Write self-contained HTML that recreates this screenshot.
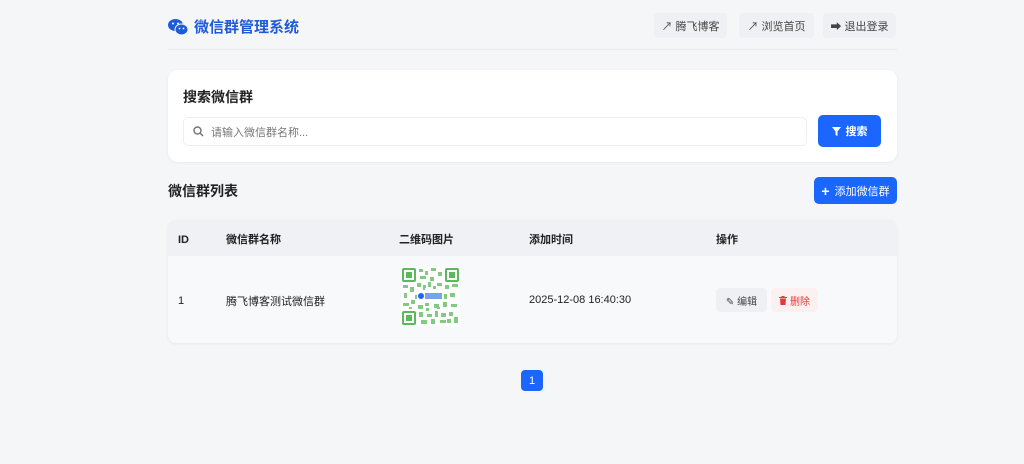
<!DOCTYPE html><html><head><meta charset="utf-8"><style>
*{box-sizing:border-box;margin:0;padding:0}
body{width:1024px;height:464px;background:#f5f6f8;font-family:"Liberation Sans","Noto Sans CJK SC",sans-serif;color:#222;position:relative;overflow:hidden}
.a{position:absolute}
.nav{position:absolute;top:13px;height:25px;background:#eef0f3;border-radius:4px;font-size:11px;color:#444;display:flex;align-items:center;justify-content:center;gap:4px}
.btn{position:absolute;background:#1a66ff;color:#fff;border-radius:5px;font-size:11px;font-weight:bold;display:flex;align-items:center;justify-content:center;gap:5px}
</style></head><body>
<div class="a" style="left:168px;top:16px;display:flex;align-items:center;gap:6px;color:#1e5bd8;font-size:15px;font-weight:bold">
<svg width="20" height="18" viewBox="0 0 20 18"><ellipse cx="7.5" cy="7" rx="7.5" ry="6" fill="#1e5bd8"/><ellipse cx="13.5" cy="11.5" rx="6.5" ry="5.5" fill="#1e5bd8" stroke="#f5f6f8" stroke-width="1"/><circle cx="5" cy="5.5" r="1" fill="#fff"/><circle cx="10" cy="5.5" r="1" fill="#fff"/><circle cx="11.5" cy="10.5" r=".9" fill="#fff"/><circle cx="15.5" cy="10.5" r=".9" fill="#fff"/></svg>微信群管理系统</div>
<div class="nav" style="left:654px;width:73px">↗ 腾飞博客</div>
<div class="nav" style="left:739px;width:75px">↗ 浏览首页</div>
<div class="nav" style="left:823px;width:73px">➡ 退出登录</div>
<div class="a" style="left:168px;top:49px;width:729px;height:1px;background:#e8eaee"></div>
<div class="a" style="left:168px;top:70px;width:729px;height:92px;background:#fff;border-radius:10px;box-shadow:0 1px 3px rgba(0,0,0,.05)"></div>
<div class="a" style="left:183px;top:87px;font-size:14px;font-weight:bold">搜索微信群</div>
<div class="a" style="left:183px;top:117px;width:624px;height:29px;border:1px solid #eceef1;border-radius:5px;font-size:11px;color:#777;display:flex;align-items:center;padding-left:9px;gap:7px">
<svg width="11" height="11" viewBox="0 0 11 11"><circle cx="4.5" cy="4.5" r="3.5" fill="none" stroke="#777" stroke-width="1.5"/><path d="M7 7l3 3" stroke="#777" stroke-width="1.5"/></svg>请输入微信群名称...</div>
<div class="btn" style="left:818px;top:115px;width:63px;height:32px"><svg width="9" height="9" viewBox="0 0 9 9"><path d="M0 0h9L5.5 4.5V9L3.5 8V4.5z" fill="#fff"/></svg>搜索</div>
<div class="a" style="left:168px;top:181px;font-size:14px;font-weight:bold">微信群列表</div>
<div class="btn" style="left:814px;top:177px;width:83px;height:27px;font-weight:normal"><b style="font-size:14px">+</b>添加微信群</div>
<div class="a" style="left:168px;top:220px;width:729px;height:123px;border-radius:8px;overflow:hidden;background:#f8f9fb;box-shadow:0 1px 3px rgba(0,0,0,.06)">
<div style="height:36px;background:#eff1f4"></div></div>
<div class="a" style="top:234px;left:178px;font-size:11px;font-weight:bold">ID</div>
<div class="a" style="top:231px;left:226px;font-size:11px;font-weight:bold">微信群名称</div>
<div class="a" style="top:231px;left:399px;font-size:11px;font-weight:bold">二维码图片</div>
<div class="a" style="top:231px;left:529px;font-size:11px;font-weight:bold">添加时间</div>
<div class="a" style="top:231px;left:716px;font-size:11px;font-weight:bold">操作</div>
<div class="a" style="top:295px;left:178px;font-size:11px">1</div>
<div class="a" style="top:293px;left:226px;font-size:11px">腾飞博客测试微信群</div>
<div class="a" style="top:294px;left:529px;font-size:11px">2025-12-08 16:40:30</div>
<svg class="a" style="left:401px;top:267px" width="59" height="59" viewBox="0 0 59 59">
<rect width="59" height="59" fill="#fff"/>
<g fill="#5cb85c">
<rect x="1" y="1" width="14" height="14" rx="2"/><rect x="44" y="1" width="14" height="14" rx="2"/><rect x="1" y="44" width="14" height="14" rx="2"/>
</g>
<g fill="#fff"><rect x="3" y="3" width="10" height="10"/><rect x="46" y="3" width="10" height="10"/><rect x="3" y="46" width="10" height="10"/></g>
<g fill="#5cb85c"><rect x="5" y="5" width="6" height="6"/><rect x="48" y="5" width="6" height="6"/><rect x="5" y="48" width="6" height="6"/></g>
<g fill="#6cbf6c" opacity=".85">
<path d="M18 2h4v3h-4zM24 4h3v4h-3zM30 1h5v3h-5zM37 5h4v4h-4zM19 9h6v3h-6zM29 10h4v4h-4zM2 18h5v3H2zM9 20h4v5H9zM16 16h4v4h-4zM36 16h5v3h-5zM44 18h4v4h-4zM51 17h6v3h-6zM3 26h3v5H3zM49 26h5v4h-5zM2 36h6v3H2zM10 33h4v4h-4zM17 38h5v4h-5zM24 36h4v3h-4zM33 37h5v4h-5zM42 35h4v5h-4zM50 37h6v3h-6zM18 45h4v5h-4zM26 47h5v3h-5zM34 44h3v6h-3zM40 46h5v4h-5zM48 45h4v4h-4zM53 50h4v6h-4zM20 53h6v4h-6zM30 52h4v5h-4zM39 53h6v3h-6zM46 52h4v4h-4zM14 28h3v4h-3zM42 27h4v5h-4zM22 18h3v3h-3zM27 15h3v5h-3zM32 19h3v3h-3zM8 40h3v2H8zM25 41h3v3h-3zM36 40h3v2h-3zM22 21h2v2h-2z"/></g>
<rect x="16" y="24" width="27" height="10" fill="#fff"/><circle cx="20" cy="29" r="3" fill="#1a66ff"/><rect x="24" y="26" width="17" height="6" fill="#3b7de0" opacity=".7"/>
</svg>
<div class="a" style="left:716px;top:288px;width:51px;height:24px;background:#eef0f3;border-radius:4px;font-size:10px;color:#444;display:flex;align-items:center;justify-content:center;gap:3px">✎ 编辑</div>
<div class="a" style="left:771px;top:288px;width:47px;height:24px;background:#fdf0f0;border-radius:4px;font-size:10px;color:#e03c3c;display:flex;align-items:center;justify-content:center;gap:3px"><svg width="8" height="9" viewBox="0 0 8 9"><path d="M0 1h8v1H0zM2.5 0h3v1h-3zM1 2.5h6L6.5 9h-5z" fill="#e03c3c"/></svg>删除</div>
<div class="btn" style="left:521px;top:370px;width:22px;height:21px;border-radius:4px;font-weight:normal">1</div>
</body></html>
